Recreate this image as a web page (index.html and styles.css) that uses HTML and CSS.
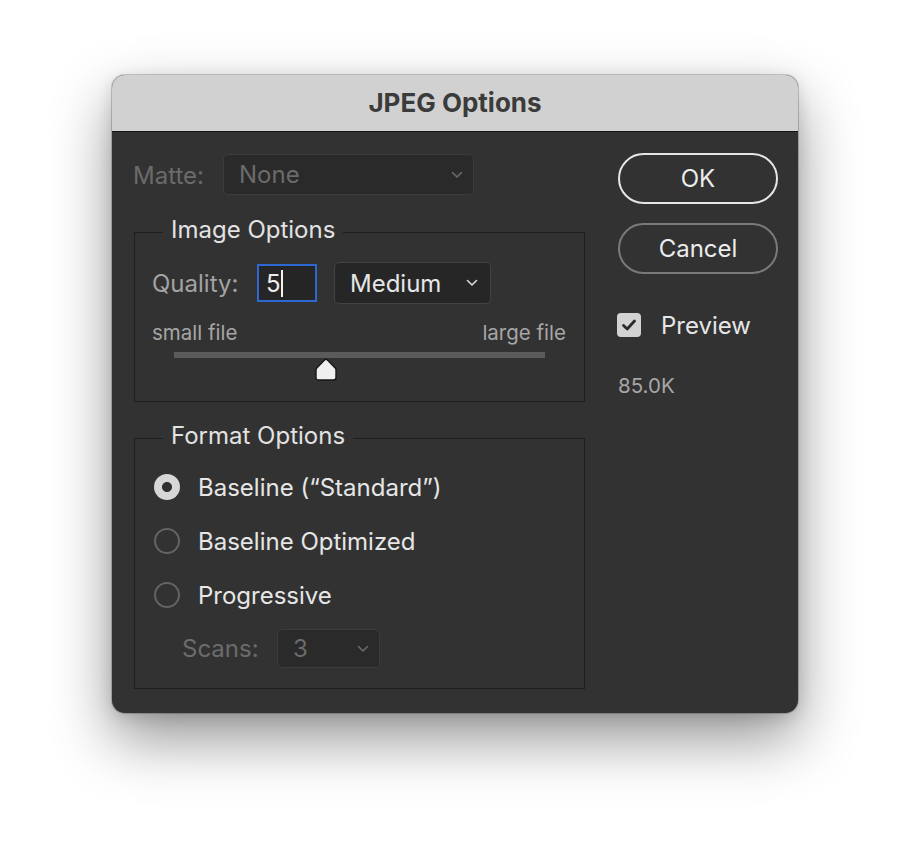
FILE: index.html
```html
<!DOCTYPE html>
<html>
<head>
<meta charset="utf-8">
<title>JPEG Options</title>
<link rel="stylesheet" href="styles.css">
</head>
<body>
<div class="page">
  <div class="window">
    <div class="titlebar">JPEG Options</div>
    <div class="content">
      <div class="left">
        <div class="matte-row">
          <span class="label disabled matte-label">Matte:</span>
          <div class="select disabled-select matte-select">
            <span>None</span>
            <svg class="chev" width="12" height="8" viewBox="0 0 12 8"><polyline points="1.5,1.5 6,6 10.5,1.5" fill="none" stroke="#6a6a6a" stroke-width="1.6" stroke-linecap="round" stroke-linejoin="round"/></svg>
          </div>
        </div>

        <fieldset class="group image-group">
          <legend>Image Options</legend>
          <div class="quality-row">
            <span class="label dim quality-label">Quality:</span>
            <div class="input"><span>5</span><span class="caret"></span></div>
            <div class="select medium-select">
              <span>Medium</span>
              <svg class="chev" width="12" height="8" viewBox="0 0 12 8"><polyline points="1.5,1.5 6,6 10.5,1.5" fill="none" stroke="#d8d8d8" stroke-width="1.6" stroke-linecap="round" stroke-linejoin="round"/></svg>
            </div>
          </div>
          <div class="size-row"><span>small file</span><span>large file</span></div>
          <div class="slider">
            <div class="track"></div>
            <div class="thumb" style="left: calc(41% - 11px)">
              <svg width="22" height="23" viewBox="0 0 22 23"><path d="M9.6 1.9 Q11 0.6 12.4 1.9 L20.2 10 Q21 10.8 21 12 L21 19.5 Q21 22 18.5 22 L3.5 22 Q1 22 1 19.5 L1 12 Q1 10.8 1.8 10 Z" fill="#efefef" stroke="#161616" stroke-width="1.4" stroke-linejoin="round"/></svg>
            </div>
          </div>
        </fieldset>

        <fieldset class="group format-group">
          <legend>Format Options</legend>
          <div class="radio-row"><span class="radio checked"></span><span class="radio-label">Baseline (“Standard”)</span></div>
          <div class="radio-row"><span class="radio"></span><span class="radio-label">Baseline Optimized</span></div>
          <div class="radio-row"><span class="radio"></span><span class="radio-label">Progressive</span></div>
          <div class="scans-row">
            <span class="label disabled scans-label">Scans:</span>
            <div class="select disabled-select scans-select">
              <span>3</span>
              <svg class="chev" width="12" height="8" viewBox="0 0 12 8"><polyline points="1.5,1.5 6,6 10.5,1.5" fill="none" stroke="#6a6a6a" stroke-width="1.6" stroke-linecap="round" stroke-linejoin="round"/></svg>
            </div>
          </div>
        </fieldset>
      </div>

      <div class="right">
        <button class="btn ok">OK</button>
        <button class="btn cancel">Cancel</button>
        <div class="check-row">
          <span class="checkbox">
            <svg width="16" height="14" viewBox="0 0 16 14"><polyline points="2.5,7.5 6.2,11 13.5,3" fill="none" stroke="#2a2a2a" stroke-width="2.8" stroke-linecap="round" stroke-linejoin="round"/></svg>
          </span>
          <span class="check-label">Preview</span>
        </div>
        <div class="size-est">85.0K</div>
      </div>
    </div>
  </div>
</div>
</body>
</html>
```

FILE: styles.css
```css
* { box-sizing: border-box; }

html, body {
  margin: 0;
  padding: 0;
  background: #ffffff;
}

body {
  font-family: "Inter", "Noto Sans", "Liberation Sans", sans-serif;
  color: #e4e4e4;
}

.page {
  padding: 75px 0 0 112px;
  width: 910px;
  height: 862px;
  overflow: hidden;
}

.window {
  width: 686px;
  height: 638px;
  border-radius: 13px;
  overflow: hidden;
  background: #323232;
  box-shadow: 0 26px 60px rgba(0, 0, 0, 0.42), 0 4px 16px rgba(0, 0, 0, 0.14), 0 0 0 1px rgba(0, 0, 0, 0.18);
}

.titlebar {
  height: 57px;
  background: #d1d1d1;
  border-bottom: 1px solid #141414;
  color: #3b3b3b;
  font-weight: 700;
  font-size: 26px;
  display: flex;
  align-items: center;
  justify-content: center;
  padding-bottom: 1px;
}

.content {
  display: flex;
  gap: 33px;
  padding: 22px 20px 0 21px;
}

.left {
  width: 452px;
  display: flex;
  flex-direction: column;
}

.label {
  font-size: 24px;
}

.disabled { color: #6b6b6b; }
.dim { color: #a3a3a3; }

.matte-row {
  display: flex;
  align-items: center;
  height: 41px;
  padding-top: 2px;
}

.matte-label { width: 90px; }

.select {
  display: flex;
  align-items: center;
  justify-content: space-between;
  border-radius: 5px;
  font-size: 24px;
}

.disabled-select {
  background: #2a2a2a;
  border: 1px solid #3c3c3c;
  color: #6b6b6b;
}

.matte-select {
  width: 251px;
  height: 41px;
  padding: 0 10px 0 15px;
  margin-top: -2px;
}

.chev { display: block; }

.group {
  margin: 0 0 0 1px;
  border: 1px solid #1e1e1e;
  padding: 0 18px 0 17px;
  min-width: 0;
}

.group legend {
  margin-left: 11px;
  padding: 0 8px 4px;
  font-size: 24px;
  line-height: 28px;
  color: #e2e2e2;
}

.image-group {
  margin-top: 21px;
  padding-bottom: 20px;
}

.quality-row {
  display: flex;
  align-items: center;
  height: 42px;
  margin-top: 14px;
}

.quality-label { width: 105px; }

.input {
  width: 60px;
  height: 38px;
  border: 2px solid #2d67d1;
  background: #252525;
  display: flex;
  align-items: center;
  padding-left: 7px;
  font-size: 24px;
  color: #ececec;
  margin-right: 17px;
}

.caret {
  width: 2px;
  height: 27px;
  background: #f2f2f2;
  margin-left: 0;
}

.medium-select {
  width: 157px;
  height: 42px;
  background: #262626;
  border: 1px solid #434343;
  color: #e6e6e6;
  padding: 0 12px 0 15px;
}

.size-row {
  display: flex;
  justify-content: space-between;
  margin-top: 18px;
  font-size: 20.5px;
  line-height: 22px;
  color: #a6a6a6;
}

.slider {
  position: relative;
  margin: 8px 21px 0 22px;
  height: 29px;
}

.track {
  height: 6px;
  background: #5b5b5b;
}

.thumb {
  position: absolute;
  top: 6px;
  width: 22px;
  height: 23px;
}

.thumb svg { display: block; }

.format-group {
  margin-top: 20px;
  padding-top: 6px;
  padding-bottom: 20px;
}

.radio-row {
  display: flex;
  align-items: center;
  height: 54px;
}

.radio {
  width: 26px;
  height: 26px;
  border-radius: 50%;
  border: 2px solid #636363;
  margin-left: 2px;
  margin-right: 18px;
  flex: none;
}

.radio.checked {
  border: none;
  background: radial-gradient(circle, #303030 0, #303030 4.6px, #d7d7d7 5.4px);
}

.radio-label {
  font-size: 24px;
  color: #e6e6e6;
}

.scans-row {
  display: flex;
  align-items: center;
  height: 39px;
  margin-top: 7px;
  padding-left: 30px;
}

.scans-label { width: 95px; }

.scans-select {
  width: 103px;
  height: 39px;
  padding: 0 10px 0 15px;
}

.right {
  width: 160px;
  display: flex;
  flex-direction: column;
}

.btn {
  width: 160px;
  height: 51px;
  border-radius: 26px;
  background: transparent;
  font-family: inherit;
  font-size: 24px;
  color: #ececec;
  padding: 0;
}

.ok {
  margin-top: -1px;
  border: 2px solid #e6e6e6;
}

.cancel {
  margin-top: 19px;
  border: 2px solid #7a7a7a;
}

.check-row {
  display: flex;
  align-items: center;
  height: 26px;
  margin-top: 38px;
}

.checkbox {
  width: 24px;
  height: 24px;
  border-radius: 4px;
  background: #d3d3d3;
  margin-left: -1px;
  margin-right: 20px;
  display: flex;
  align-items: center;
  justify-content: center;
}

.checkbox svg { display: block; }

.check-label {
  font-size: 24px;
  color: #e6e6e6;
}

.size-est {
  margin-top: 37px;
  font-size: 20.5px;
  line-height: 22px;
  color: #a6a6a6;
}
```
